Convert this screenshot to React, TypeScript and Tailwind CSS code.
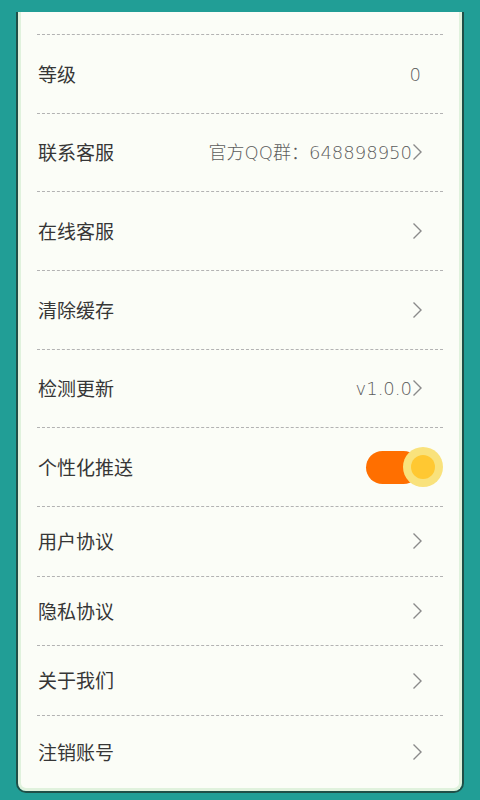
import React from 'react';

type Row = {
    label: string;
    value?: string;
    arrow?: boolean;
    toggle?: boolean;
    tall?: boolean;
};

const rows: Row[] = [
    { label: '等级', value: '0', tall: true },
    { label: '联系客服', value: '官方QQ群：648898950', arrow: true, tall: true },
    { label: '在线客服', arrow: true, tall: true },
    { label: '清除缓存', arrow: true, tall: true },
    { label: '检测更新', value: 'v1.0.0', arrow: true, tall: true },
    { label: '个性化推送', toggle: true, tall: true },
    { label: '用户协议', arrow: true },
    { label: '隐私协议', arrow: true },
    { label: '关于我们', arrow: true },
];

const Chevron = () => (
    <svg width="10" height="18" viewBox="0 0 10 18" className="shrink-0">
        <polyline points="1.5,1.5 9,9 1.5,16.5" fill="none" stroke="#8a8a8a" strokeWidth="1.4" />
    </svg>
);

const Toggle = () => (
    <div className="relative w-[77px] h-[40px] flex items-center">
        <div className="w-[54px] h-[33px] rounded-full bg-[#ff6f00]" />
        <div className="absolute right-0 top-0 w-[40px] h-[40px] rounded-full bg-[#f9e27c] flex items-center justify-center">
            <div className="w-[24px] h-[24px] rounded-full bg-[#ffc832]" />
        </div>
    </div>
);

const SettingRow: React.FC<{ row: Row }> = ({ row }) => (
    <div
        className={`flex items-center justify-between border-t border-dashed border-[#b3b3b3] pl-[1px] ${row.tall ? 'h-[78.67px]' : 'h-[69.67px]'} ${row.toggle ? 'pr-0' : row.arrow ? 'pr-[21px]' : 'pr-[22px]'}`}
    >
        <span className="text-[19px] text-[#363636]">{row.label}</span>
        <div className="flex items-center">
            {row.value && (
                <span
                    className="text-[18px] font-light text-[#5c5c5c] leading-none pt-[2px]"
                    style={{ fontFamily: '"DejaVu Sans", "Noto Sans CJK SC", sans-serif' }}
                >
                    {row.value}
                </span>
            )}
            {row.arrow && <Chevron />}
            {row.toggle && <Toggle />}
        </div>
    </div>
);

export default function App() {
    return (
        <div
            className="h-[800px] w-[480px] overflow-hidden bg-[#219e96] pt-[12px]"
            style={{ fontFamily: '"Noto Sans CJK SC", "Noto Sans", sans-serif' }}
        >
            <div className="ml-[16px] w-[448px] border-x-2 border-b-2 border-[#1f4f48] rounded-b-[10px]">
                <div className="bg-[#fbfdf7] border-x-[3px] border-b-[3px] border-[#e0f2dd] rounded-b-[8px] pt-[22px] px-[16px]">
                    {rows.map((row) => (
                        <SettingRow key={row.label} row={row} />
                    ))}
                    <div className="flex items-center justify-between border-t border-dashed border-[#b3b3b3] pl-[1px] pr-[21px] h-[73px]">
                        <span className="text-[19px] text-[#363636]">注销账号</span>
                        <Chevron />
                    </div>
                </div>
            </div>
        </div>
    );
}
